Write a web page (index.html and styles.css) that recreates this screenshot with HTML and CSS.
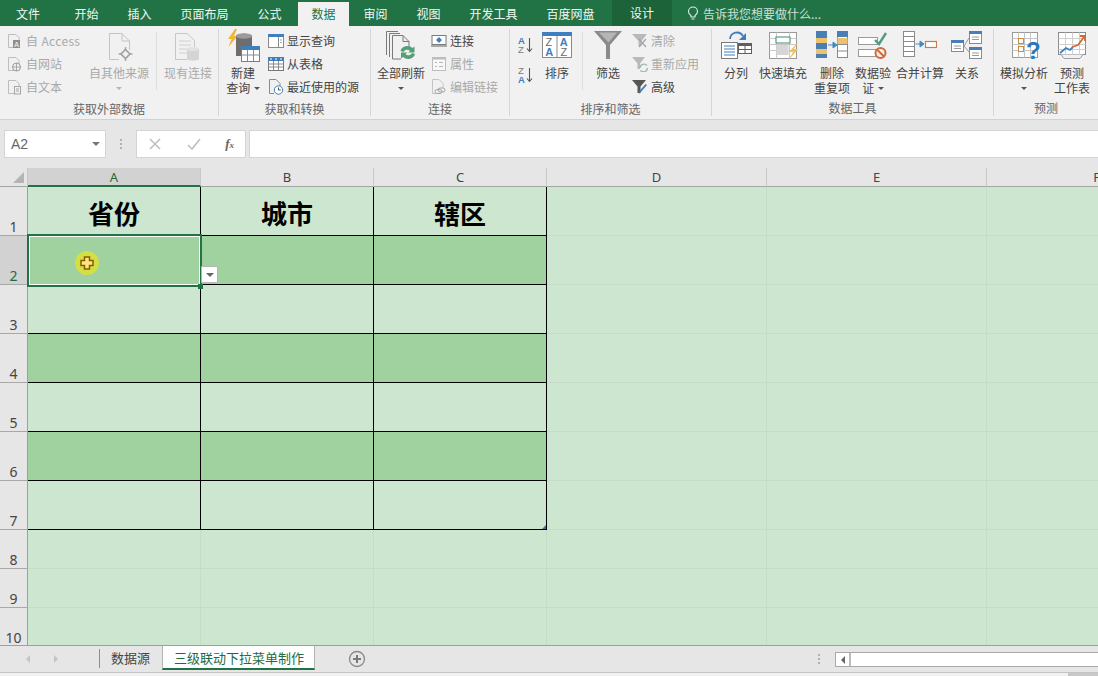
FILE: index.html
```html
<!DOCTYPE html>
<html lang="zh-CN">
<head>
<meta charset="utf-8">
<title>Excel</title>
<link rel="stylesheet" href="styles.css">
</head>
<body>
<div class="app">
  <nav class="tabs">
    <span class="tab first">文件</span><span class="tab">开始</span><span class="tab">插入</span><span class="tab">页面布局</span><span class="tab">公式</span><span class="tab active">数据</span><span class="tab">审阅</span><span class="tab">视图</span><span class="tab">开发工具</span><span class="tab">百度网盘</span>
    <span class="tab design">设计</span>
    <span class="tell">
      <svg width="12" height="15" viewBox="0 0 12 15"><path d="M4 11V9.500C2.500 8.500 1.500 7.200 1.500 5.500a4.500 4.500 0 0 1 9 0C10.500 7.200 9.500 8.500 8 9.500V11ZM4.500 13h3" fill="none" stroke="#e4efe8" stroke-width="1.100"/></svg>
      告诉我您想要做什么...
    </span>
  </nav>

  <section class="ribbon">
    <div class="group g1">
      <div class="body">
        <div class="col small-col w82 ml7">
          <div class="sm off"><svg width="16" height="16" viewBox="0 0 16 16"><path d="M1.500 1.500H9L12 4.500V14.500H1.500Z" fill="none" stroke="#bdbdbd"/><rect x="6" y="7" width="7" height="8" fill="#8f8f8f"/><text x="7.200" y="13.500" class="svgt" font-size="7" fill="#fff">A</text></svg><span class="access">自 Access</span></div>
          <div class="sm off"><svg width="16" height="16" viewBox="0 0 16 16"><path d="M1.500 1.500H9L12 4.500V14.500H1.500Z" fill="none" stroke="#bdbdbd"/><circle cx="9.500" cy="11" r="4" fill="#f1f1f1" stroke="#9a9a9a"/><path d="M5.500 11h8M9.500 7v8" stroke="#9a9a9a" stroke-width=".8"/></svg><span>自网站</span></div>
          <div class="sm off"><svg width="16" height="16" viewBox="0 0 16 16"><path d="M1.500 1.500H9L12 4.500V14.500H1.500Z" fill="none" stroke="#bdbdbd"/><rect x="7.500" y="7.500" width="6" height="7.500" fill="#f1f1f1" stroke="#a5a5a5"/><path d="M9 10h3M9 12h3" stroke="#a5a5a5"/></svg><span>自文本</span></div>
        </div>
        <div class="lg off w60">
          <svg class="ic" width="32" height="32" viewBox="0 0 32 32"><path d="M6.500 3.500H19L26.500 11V20M6.500 3.500V29.500H16" fill="none" stroke="#c4c4c4"/><path d="M19 3.500V11H26.500" fill="none" stroke="#c4c4c4"/><path d="M22.500 17v14M15.500 24h14" stroke="#a9a9a9" stroke-width="1.500"/><path d="M22.500 19.500l4.500 4.500-4.500 4.500-4.500-4.500Z" fill="#f1f1f1" stroke="#a0a0a0" stroke-width="1.600"/></svg>
          <span class="t">自其他来源</span><i class="caret"></i>
        </div>
        <div class="vr ml7"></div>
        <div class="lg off w50 ml6">
          <svg class="ic" width="32" height="32" viewBox="0 0 32 32"><path d="M3.500 3.500H15L22.500 10.500V17M3.500 3.500V29.500H15" fill="none" stroke="#c6c6c6"/><path d="M7 11h12M7 15h12M7 19h8M7 23h8" stroke="#d0d0d0"/><path d="M15 19v10c0 2 12 2 12 0V19Z" fill="#d4d4d4"/><ellipse cx="21" cy="19" rx="6" ry="2" fill="#e2e2e2"/></svg>
          <span class="t">现有连接</span>
        </div>
      </div>
      <div class="glabel">获取外部数据</div>
    </div>

    <div class="group g2">
      <div class="body">
        <div class="lg w36 ml6">
          <svg class="ic" width="36" height="34" viewBox="0 0 36 34"><path d="M10 0L3 10h3.500L3.500 18l9-11H9L12 0Z" fill="#f2b632"/><path d="M11 7c0-3 16-3 16 0v20H11Z" fill="#6d6d6d"/><ellipse cx="19" cy="7" rx="8" ry="2.800" fill="#9b9b9b"/><rect x="16.500" y="17.500" width="18" height="15" fill="#fff" stroke="#7d7d7d"/><rect x="16" y="17" width="19" height="4" fill="#3f7fbe"/><path d="M16.500 26h18M22.500 21v11M28.500 21v11" stroke="#8a8a8a"/></svg>
          <span class="t">新建</span><span class="t">查询 <i class="caret inl"></i></span>
        </div>
        <div class="col small-col ml7">
          <div class="sm"><svg width="16" height="16" viewBox="0 0 16 16"><rect x=".5" y="1.500" width="15" height="13" fill="#fff" stroke="#8a8a8a"/><rect y="1" width="16" height="3" fill="#3f7fbe"/><path d="M10.500 4v10" stroke="#8a8a8a"/><path d="M12 7h2M12 9.500h2" stroke="#a5a5a5"/></svg><span>显示查询</span></div>
          <div class="sm"><svg width="16" height="16" viewBox="0 0 16 16"><rect x=".5" y="1.500" width="15" height="13" fill="#fff" stroke="#777"/><rect y="1" width="16" height="4" fill="#3f7fbe"/><path d="M.5 8h15M.5 11h15M5.500 5v9M10.500 5v9" stroke="#8a8a8a"/><path d="M2 3h2M7 3h2M12 3h2" stroke="#fff"/></svg><span>从表格</span></div>
          <div class="sm"><svg width="16" height="16" viewBox="0 0 16 16"><path d="M1.500 .5H8L12 4.500V8M1.500 .5V14.500H6" fill="none" stroke="#8a8a8a"/><circle cx="10.500" cy="11" r="4.200" fill="#fff" stroke="#3f7fbe"/><path d="M10.500 8.500V11h2.200" fill="none" stroke="#555"/></svg><span>最近使用的源</span></div>
        </div>
      </div>
      <div class="glabel">获取和转换</div>
    </div>

    <div class="group g3">
      <div class="body">
        <div class="lg w50 ml5">
          <svg class="ic" width="32" height="34" viewBox="0 0 32 34"><path d="M1.500 2.500H13M1.500 2.500V26M4.500 4.500H15M4.500 4.500V28M7.500 6.500H18L24 12.500V20M7.500 6.500V30H16" fill="#f1f1f1" stroke="#7a7a7a"/><path d="M18 6.500v6h6" fill="none" stroke="#7a7a7a"/><path d="M15.500 22a7 6 0 0 1 12-3l2-1.500v6h-6.500l2-1.500a4 4 0 0 0-6.500 1Z" fill="#55a077"/><path d="M30 25a7 6 0 0 1-12 3l-2 1.500v-6h6.500l-2 1.500a4 4 0 0 0 6.500-1Z" fill="#55a077"/></svg>
          <span class="t">全部刷新</span><i class="caret dark"></i>
        </div>
        <div class="col small-col ml5">
          <div class="sm"><svg width="16" height="16" viewBox="0 0 16 16"><rect x="1" y="2.500" width="14" height="9" fill="#fff" stroke="#7a7a7a"/><path d="M0 13h16" stroke="#8f8f8f" stroke-width="1.500"/><path d="M8 4l3 3-3 3-3-3Z" fill="#3f7fbe"/></svg><span>连接</span></div>
          <div class="sm off"><svg width="16" height="16" viewBox="0 0 16 16"><rect x="1.500" y="1.500" width="13" height="13" fill="#f8f8f8" stroke="#bdbdbd"/><path d="M1.500 2.500h13" stroke="#bdbdbd" stroke-width="2"/><path d="M4 6.500h2M8 6.500h4M4 10.500h2M8 10.500h4" stroke="#b5b5b5"/></svg><span>属性</span></div>
          <div class="sm off"><svg width="16" height="16" viewBox="0 0 16 16"><path d="M1.500 .5H8L12 4.500V9M1.500 .5V14.500H5" fill="none" stroke="#c4c4c4"/><path d="M7 11a2 2 0 0 1 2-2h3a2 2 0 0 1 0 4H9a2 2 0 0 1-2-2Z M4 12.500a2 2 0 0 1 2-2h3a2 2 0 0 1 0 4H6a2 2 0 0 1-2-2Z" fill="none" stroke="#a5a5a5"/></svg><span>编辑链接</span></div>
        </div>
      </div>
      <div class="glabel">连接</div>
    </div>

    <div class="group g4">
      <div class="body">
        <div class="col sort-col ml8">
          <svg width="16" height="18" viewBox="0 0 16 18"><text x="0" y="8" class="svgt" font-size="9.500" fill="#3f7fbe" font-weight="700">A</text><text x="0" y="16.500" class="svgt" font-size="9.500" fill="#7a7a7a">Z</text><path d="M11.500 2v13M9 12.500l2.500 3 2.500-3" fill="none" stroke="#555" stroke-width="1.100"/></svg>
          <svg width="16" height="18" viewBox="0 0 16 18"><text x="0" y="8" class="svgt" font-size="9.500" fill="#7a7a7a">Z</text><text x="0" y="16.500" class="svgt" font-size="9.500" fill="#3f7fbe" font-weight="700">A</text><path d="M11.500 2v13M9 12.500l2.500 3 2.500-3" fill="none" stroke="#555" stroke-width="1.100"/></svg>
        </div>
        <div class="lg w38 ml4">
          <svg class="ic" width="30" height="34" viewBox="0 0 30 34"><rect x=".5" y="3.500" width="29" height="25" fill="#fff" stroke="#8a8a8a"/><rect y="3" width="30" height="4" fill="#3f7fbe"/><path d="M15 7v21" stroke="#8a8a8a"/><text x="3.500" y="17" class="svgt" font-size="11" fill="#6a6a6a">Z</text><text x="3.200" y="27" class="svgt" font-size="11" fill="#3f7fbe" font-weight="700">A</text><text x="17.800" y="17" class="svgt" font-size="11" fill="#3f7fbe" font-weight="700">A</text><text x="18.500" y="27" class="svgt" font-size="11" fill="#6a6a6a">Z</text></svg>
          <span class="t">排序</span>
        </div>
        <div class="vr ml6"></div>
        <div class="lg w38 ml6">
          <svg class="ic" width="30" height="34" viewBox="0 0 30 34"><path d="M1 2H29L17 16V30H13V16Z" fill="#8a8a8a"/><path d="M6 3.500H24L15.500 13.500Z" fill="#b5b5b5"/></svg>
          <span class="t">筛选</span>
        </div>
        <div class="col small-col ml5">
          <div class="sm off"><svg width="16" height="16" viewBox="0 0 16 16"><path d="M0 1H15L9.500 8V13H6.500V8Z" fill="#b9b9b9"/><path d="M7 6l7 8M14 6l-7 8" stroke="#a5a5a5" stroke-width="1.200"/></svg><span>清除</span></div>
          <div class="sm off"><svg width="16" height="16" viewBox="0 0 16 16"><path d="M0 1H13L8 7.500V13H5.500V7.500Z" fill="#b9b9b9"/><path d="M8 12a4 4 0 0 1 7-2.500M15.500 12a4 4 0 0 1-7 2.500" fill="none" stroke="#9cbcae" stroke-width="1.400"/></svg><span>重新应用</span></div>
          <div class="sm"><svg width="16" height="16" viewBox="0 0 16 16"><path d="M0 1H14L8.500 7.500V14H5.500V7.500Z" fill="#555"/><path d="M15 6L9 13l-2 2 .5-3 6-7Z" fill="#3f7fbe"/></svg><span>高级</span></div>
        </div>
      </div>
      <div class="glabel">排序和筛选</div>
    </div>

    <div class="group g5">
      <div class="body">
        <div class="lg w40 ml4">
          <svg class="ic" width="32" height="34" viewBox="0 0 32 34"><rect x="1.500" y="13.500" width="16" height="16" fill="#fff" stroke="#7a7a7a"/><path d="M4 17h11M4 20h11M4 23h11M4 26h11" stroke="#3f7fbe"/><path d="M10 10a7 7 0 0 1 13-3" fill="none" stroke="#3f7fbe" stroke-width="1.800"/><path d="M26 4v7h-7Z" fill="#3f7fbe"/><rect x="18.500" y="14.500" width="13" height="10" fill="#fff" stroke="#5e5e5e"/><rect x="18" y="14" width="14" height="3" fill="#5e5e5e"/><path d="M25 17v7M19 20.500h12" stroke="#5e5e5e"/></svg>
          <span class="t">分列</span>
        </div>
        <div class="lg w52 ml1">
          <svg class="ic" width="32" height="34" viewBox="0 0 32 34"><rect x="2.500" y="3.500" width="27" height="26" fill="#fff" stroke="#9a9a9a"/><path d="M2.500 9.500h27M2.500 15.500h27M2.500 21.500h27M9.500 3.500v26M22.500 3.500v26" stroke="#c8c8c8"/><rect x="9" y="8" width="14" height="6" fill="#fff" stroke="#5a9d82" stroke-width="1.200"/><rect x="9.500" y="16" width="12" height="10" fill="#d6d6d6"/><path d="M31 13l-9 10h4l-5 9 10-12h-4l4-7Z" fill="#f2c25a"/></svg>
          <span class="t">快速填充</span>
        </div>
        <div class="lg w44 ml1">
          <svg class="ic" width="34" height="34" viewBox="0 0 34 34"><rect x="1" y="2" width="11" height="27" fill="#4a7fb5"/><rect x="1" y="9" width="11" height="5" fill="#eec26b"/><rect x="1" y="20" width="11" height="5" fill="#eec26b"/><path d="M13 16h7M18 13l4 3-4 3Z" fill="#3f8ac9" stroke="#3f8ac9"/><rect x="22.500" y="2.500" width="10" height="26" fill="#fff" stroke="#8a8a8a"/><rect x="22" y="2" width="11" height="6" fill="#4a7fb5"/><rect x="22.500" y="9" width="10" height="6" fill="#eec26b"/><path d="M22.500 15.500h10M22.500 22h10" stroke="#8a8a8a"/></svg>
          <span class="t">删除</span><span class="t">重复项</span>
        </div>
        <div class="lg w36 ml1">
          <svg class="ic" width="30" height="34" viewBox="0 0 30 34"><rect x=".5" y="8.500" width="19" height="7" fill="#fff" stroke="#9a9a9a"/><rect x=".5" y="20.500" width="19" height="7" fill="#fff" stroke="#9a9a9a"/><path d="M17 11l4 4 7-11" fill="none" stroke="#4f9d7d" stroke-width="2.400"/><circle cx="22.500" cy="24" r="5" fill="#f1f1f1" stroke="#cf6a3c" stroke-width="2"/><path d="M19 20.500l7 7" stroke="#cf6a3c" stroke-width="2"/></svg>
          <span class="t">数据验</span><span class="t">证 <i class="caret inl"></i></span>
        </div>
        <div class="lg w52 ml3">
          <svg class="ic" width="34" height="34" viewBox="0 0 34 34"><rect x=".5" y="2.500" width="11" height="25" fill="#fff" stroke="#8a8a8a"/><path d="M.5 7.500h11M.5 12.500h11M.5 17.500h11M.5 22.500h11" stroke="#8a8a8a"/><path d="M12.500 15h6M17 12l4 3-4 3Z" fill="#3f8ac9" stroke="#3f8ac9"/><rect x="22.500" y="12.500" width="11" height="6" fill="#fff" stroke="#cf7a4a" stroke-width="1.200"/></svg>
          <span class="t">合并计算</span>
        </div>
        <div class="lg w40 ml1">
          <svg class="ic" width="32" height="34" viewBox="0 0 32 34"><rect x=".5" y="11.500" width="12" height="11" fill="#fff" stroke="#8a8a8a"/><rect y="11" width="13" height="3" fill="#4a7fb5"/><path d="M3 17h7M3 19.500h7" stroke="#9a9a9a"/><rect x="18.500" y="2.500" width="12" height="12" fill="#fff" stroke="#8a8a8a"/><rect x="18" y="2" width="13" height="3" fill="#4a7fb5"/><path d="M21 8h7M21 10.500h7" stroke="#9a9a9a"/><rect x="18.500" y="18.500" width="12" height="11" fill="#fff" stroke="#8a8a8a"/><rect x="18" y="18" width="13" height="3" fill="#4a7fb5"/><path d="M21 24h7M21 26.500h7" stroke="#9a9a9a"/><path d="M13 17L18 9M13 17l5 6" stroke="#9a9a9a"/></svg>
          <span class="t">关系</span>
        </div>
      </div>
      <div class="glabel">数据工具</div>
    </div>

    <div class="group g6">
      <div class="body">
        <div class="lg w52 ml4">
          <svg class="ic" width="32" height="34" viewBox="0 0 32 34"><rect x="4.500" y="3.500" width="25" height="25" fill="#fff" stroke="#9a9a9a"/><path d="M4.500 9.500h25M4.500 15.500h25M4.500 21.500h25M10.500 3.500v25M16.500 3.500v25M22.500 3.500v25" stroke="#c4c4c4"/><rect x="10.500" y="9.500" width="5" height="5" fill="#fff" stroke="#cf8a3c"/><rect x="10.500" y="17.500" width="5" height="5" fill="#fff" stroke="#cf8a3c"/><text x="18" y="30" class="svgt" font-size="24" font-weight="700" fill="#2f78b8">?</text></svg>
          <span class="t">模拟分析</span><i class="caret dark"></i>
        </div>
        <div class="lg w40 ml2">
          <svg class="ic" width="30" height="34" viewBox="0 0 30 34"><rect x="1.500" y="3.500" width="27" height="22" fill="#fff" stroke="#8a8a8a"/><path d="M1.500 9.500h27M1.500 15.500h27M1.500 20.500h27M8.500 3.500v22M15.500 3.500v22M22.500 3.500v22" stroke="#cfcfcf"/><path d="M3 24l6-5 4 2 3-3" fill="none" stroke="#3f7fbe" stroke-width="1.800"/><path d="M15 18l6-2 6-8M23 7h5v5" fill="none" stroke="#d0693a" stroke-width="1.800"/><path d="M4 25.500l3 4h16l3-4" fill="#f1f1f1" stroke="#a0a0a0"/></svg>
          <span class="t">预测</span><span class="t">工作表</span>
        </div>
      </div>
      <div class="glabel">预测</div>
    </div>
  </section>

  <section class="fbar">
    <div class="namebox"><span>A2</span><i class="caret grey"></i></div>
    <div class="dots"><b></b><b></b><b></b></div>
    <div class="fbtns">
      <svg width="14" height="14" viewBox="0 0 14 14"><path d="M2 2l10 10M12 2L2 12" stroke="#c0c0c0" stroke-width="1.600"/></svg>
      <svg width="14" height="14" viewBox="0 0 14 14"><path d="M1 8l4 4 8-10" fill="none" stroke="#c0c0c0" stroke-width="1.600"/></svg>
      <span class="fx">f<sub>x</sub></span>
    </div>
    <div class="finput"></div>
  </section>

  <section class="sheet">
    <div class="corner"><i></i></div>
    <div class="ch sel">A</div><div class="ch">B</div><div class="ch">C</div><div class="ch">D</div><div class="ch">E</div><div class="ch">F</div>

    <div class="rh">1</div><div class="c k hd">省份</div><div class="c k hd">城市</div><div class="c k hd">辖区</div><div class="c"></div><div class="c"></div><div class="c"></div>
    <div class="rh sel">2</div><div class="c k d"></div><div class="c k d"></div><div class="c k d"></div><div class="c"></div><div class="c"></div><div class="c"></div>
    <div class="rh">3</div><div class="c k"></div><div class="c k"></div><div class="c k"></div><div class="c"></div><div class="c"></div><div class="c"></div>
    <div class="rh">4</div><div class="c k d"></div><div class="c k d"></div><div class="c k d"></div><div class="c"></div><div class="c"></div><div class="c"></div>
    <div class="rh">5</div><div class="c k"></div><div class="c k"></div><div class="c k"></div><div class="c"></div><div class="c"></div><div class="c"></div>
    <div class="rh">6</div><div class="c k d"></div><div class="c k d"></div><div class="c k d"></div><div class="c"></div><div class="c"></div><div class="c"></div>
    <div class="rh">7</div><div class="c k"></div><div class="c k"></div><div class="c k"></div><div class="c"></div><div class="c"></div><div class="c"></div>
    <div class="rh">8</div><div class="c"></div><div class="c"></div><div class="c"></div><div class="c"></div><div class="c"></div><div class="c"></div>
    <div class="rh">9</div><div class="c"></div><div class="c"></div><div class="c"></div><div class="c"></div><div class="c"></div><div class="c"></div>
    <div class="rh">10</div><div class="c"></div><div class="c"></div><div class="c"></div><div class="c"></div><div class="c"></div><div class="c"></div>

    <div class="selection"><i class="handle"></i></div>
    <div class="ddbtn"><i class="caret dark"></i></div>
    <div class="cursor"><svg width="14" height="14" viewBox="0 0 14 14"><path d="M4.500 1H9.500V4.500H13V9.500H9.500V13H4.500V9.500H1V4.500H4.500Z" fill="#ffe680" stroke="#8a5a00" stroke-width="1.500"/></svg></div>
    <div class="resize"></div>
  </section>

  <footer class="sheetbar">
    <div class="nav"><i class="tri l"></i><i class="tri r"></i></div>
    <div class="sep"></div>
    <span class="stab">数据源</span>
    <span class="stab on">三级联动下拉菜单制作</span>
    <svg class="add" width="18" height="18" viewBox="0 0 18 18"><circle cx="9" cy="9" r="7.500" fill="none" stroke="#8a8a8a" stroke-width="1.300"/><path d="M9 5v8M5 9h8" stroke="#7a7a7a" stroke-width="2"/></svg>
    <div class="spacer"></div>
    <div class="dots h"><b></b><b></b><b></b></div>
    <div class="scroll"><span class="sbtn"><i class="tri l dk"></i></span><span class="track"></span></div>
  </footer>
  <div class="status"><i></i></div>
</div>
</body>
</html>
```

FILE: styles.css
```css
* { box-sizing: border-box; }
html, body { margin: 0; padding: 0; width: 1098px; height: 676px; overflow: hidden; }
body { font-family: "Noto Sans CJK SC", "Noto Sans", sans-serif; font-size: 12px; color: #444; background: #f1f1f1; }
.app { width: 1098px; height: 676px; display: flex; flex-direction: column; overflow: hidden; }

/* title tabs */
.tabs { height: 26px; flex: none; background: #217346; display: flex; align-items: flex-end; color: #fff; padding-left: 2px; }
.tab { height: 24px; line-height: 24px; width: 53px; flex: none; text-align: center; color: #f2f7f4; white-space: nowrap; }
.tab:nth-child(4), .tab:nth-child(9), .tab:nth-child(10) { width: 77px; }
.tab.first { width: 58px; padding-right: 6px; }
.tab.active { background: #f1f1f1; color: #217346; margin: 0 0 0 2px; width: 51px; }
.tab.design { background: #1d6339; width: 60px; height: 26px; line-height: 26px; margin-left: 3px; }
.tell { display: flex; align-items: center; gap: 4px; height: 26px; margin-left: 15px; color: #cfe0d6; }

/* ribbon */
.ribbon { height: 94px; flex: none; background: #f1f1f1; display: flex; border-bottom: 1px solid #d2d2d2; padding-top: 3px; }
.group { height: 87px; flex: none; border-right: 1px solid #d6d6d6; display: flex; flex-direction: column; }
.g1 { width: 219px; } .g2 { width: 152px; } .g3 { width: 139px; } .g4 { width: 202px; } .g5 { width: 282px; } .g6 { width: 104px; border-right: 0; }
.body { height: 70px; display: flex; align-items: flex-start; }
.glabel { height: 16px; line-height: 16px; text-align: center; color: #666; margin-top: 3px; }
.col { display: flex; flex-direction: column; flex: none; }
.small-col { padding-top: 0; }
.sort-col { width: 16px; gap: 12px; padding-top: 7px; }
.sm { height: 23px; display: flex; align-items: center; gap: 3px; white-space: nowrap; }
.sm svg { flex: none; }
.access { letter-spacing: .35px; }
.off { color: #a9a9a9; }
.lg { display: flex; flex-direction: column; align-items: center; flex: none; line-height: 15px; white-space: nowrap; }
.ic { height: 34px; margin-bottom: 2px; flex: none; }
.t { height: 15px; display: block; }
.svgt { font-family: "Liberation Sans", sans-serif; }
.caret { display: block; width: 0; height: 0; border: 3px solid transparent; border-top: 3px solid #b5b5b5; border-bottom: 0; margin-top: 7px; }
.caret.dark { border-top-color: #555; }
.caret.inl { display: inline-block; border-top-color: #555; margin: 0 0 2px 1px; vertical-align: middle; }
.vr { width: 1px; height: 58px; background: #dedede; margin-top: 3px; flex: none; }
.w82 { width: 82px; } .w60 { width: 60px; } .w50 { width: 50px; } .w52 { width: 52px; } .w44 { width: 44px; } .w40 { width: 40px; } .w38 { width: 38px; } .w36 { width: 36px; }
.ml1 { margin-left: 1px; } .ml2 { margin-left: 2px; } .ml3 { margin-left: 3px; } .ml4 { margin-left: 4px; } .ml5 { margin-left: 5px; } .ml6 { margin-left: 6px; } .ml7 { margin-left: 7px; } .ml8 { margin-left: 8px; }

/* formula bar */
.fbar { height: 48px; flex: none; background: #e6e6e6; display: flex; align-items: flex-start; padding: 10px 0 0 4px; }
.namebox { width: 102px; height: 28px; background: #fff; border: 1px solid #d4d4d4; display: flex; align-items: center; justify-content: space-between; padding: 0 5px 0 6px; font: 14px "Liberation Sans", sans-serif; color: #666; }
.namebox .caret { margin: 0; border-width: 4px; border-bottom: 0; }
.namebox .caret.grey { border-top-color: #777; }
.dots { width: 30px; height: 28px; display: flex; flex-direction: column; align-items: center; justify-content: center; gap: 2px; }
.dots b { width: 2px; height: 2px; background: #b0b0b0; display: block; }
.fbtns { width: 110px; height: 28px; background: #fff; border: 1px solid #d4d4d4; display: flex; align-items: center; justify-content: space-between; padding: 0 11px 0 11px; margin-right: 3px; }
.fx { font: italic 700 13px "Liberation Serif", serif; color: #666; }
.fx sub { font-size: 9px; vertical-align: baseline; }
.finput { flex: 1; height: 28px; background: #fff; border: 1px solid #d4d4d4; border-right: 0; }

/* sheet */
.sheet { position: relative; height: 477px; flex: none; display: grid; grid-template-columns: 28px 173px 173px 173px 220px 220px 220px; grid-template-rows: 19px 49px 49px 49px 49px 49px 49px 49px 39px 39px 39px; overflow: hidden; background: #cde6d0; }
.corner { background: #e6e6e6; border-right: 1px solid #c8c8c8; border-bottom: 1px solid #a0a8a0; position: relative; }
.corner i { position: absolute; right: 3px; bottom: 3px; width: 0; height: 0; border-style: solid; border-width: 0 0 11px 11px; border-color: transparent transparent #b4b4b4 transparent; }
.ch { background: #e6e6e6; border-right: 1px solid #c8c8c8; border-bottom: 1px solid #a0a8a0; display: flex; align-items: center; justify-content: center; font: 13px "Noto Sans", sans-serif; color: #444; }
.ch.sel { background: #d2d2d2; color: #1e6b41; border-bottom: 2px solid #217346; }
.rh { background: #e6e6e6; border-right: 1px solid #9f9f9f; border-bottom: 1px solid #a8a8a8; display: flex; align-items: flex-end; justify-content: center; font: 14px/16px "Noto Sans", sans-serif; color: #444; }
.rh.sel { background: #d2d2d2; color: #1e6b41; }
.c { background: #cde6d0; border-right: 1px solid #c4dcc8; border-bottom: 1px solid #c4dcc8; }
.c.k { border-right-color: #000; border-bottom-color: #000; }
.c.d { background: #a0d2a0; }
.hd { display: flex; align-items: center; justify-content: center; font-size: 26px; font-weight: 700; color: #000; padding-top: 3px; }
.selection { position: absolute; left: 27px; top: 66px; width: 175px; height: 53px; border: 2px solid #217346; box-shadow: inset 0 0 0 1px #fff; }
.handle { position: absolute; right: -3px; bottom: -4px; width: 5px; height: 5px; background: #217346; }
.ddbtn { position: absolute; left: 201px; top: 98px; width: 17px; height: 17px; background: #fff; border: 1px solid #b5b5b5; display: flex; align-items: center; justify-content: center; }
.ddbtn .caret { margin: 0; border-width: 4px; border-bottom: 0; border-top-color: #666; }
.cursor { position: absolute; left: 75px; top: 83px; width: 24px; height: 24px; border-radius: 50%; background: #d2e045; display: flex; align-items: center; justify-content: center; }
.resize { position: absolute; left: 542px; top: 357px; width: 0; height: 0; border-style: solid; border-width: 0 0 4px 4px; border-color: transparent transparent #3a6ea5 transparent; }

/* sheet tabs */
.sheetbar { height: 28px; flex: none; background: #e6e6e6; border-top: 1px solid #9f9f9f; border-bottom: 1px solid #c4c4c4; display: flex; align-items: flex-start; }
.nav { width: 99px; height: 26px; display: flex; align-items: center; gap: 24px; padding-left: 26px; }
.tri { display: block; width: 0; height: 0; border: 4px solid transparent; }
.tri.l { border-left: 0; border-right: 4px solid #c4c4c4; }
.tri.r { border-right: 0; border-left: 4px solid #c4c4c4; }
.tri.dk { border-right-color: #666; }
.sep { width: 1px; height: 19px; background: #8f8f8f; margin-top: 3px; flex: none; }
.stab { height: 24px; line-height: 23px; white-space: nowrap; font-size: 13px; color: #444; padding: 0 11px; width: 62px; flex: none; }
.stab.on { background: #fff; color: #1e6b41; width: 153px; border-bottom: 2px solid #217346; border-left: 1px solid #b5b5b5; border-right: 1px solid #b5b5b5; }
.add { margin: 4px 0 0 33px; flex: none; }
.spacer { flex: 1; }
.dots.h { width: 16px; height: 26px; margin-right: 8px; }
.scroll { width: 263px; height: 15px; margin-top: 6px; display: flex; flex: none; background: #fff; border: 1px solid #a9a9a9; border-right: 0; }
.sbtn { width: 15px; flex: none; display: flex; align-items: center; justify-content: center; border-right: 2px solid #bdbdbd; }
.track { flex: 1; }

.status { flex: 1; background: #f1f1f1; position: relative; }
.status i { position: absolute; right: 0; top: 0; width: 30px; height: 3px; background: #c8c8c8; }
```
